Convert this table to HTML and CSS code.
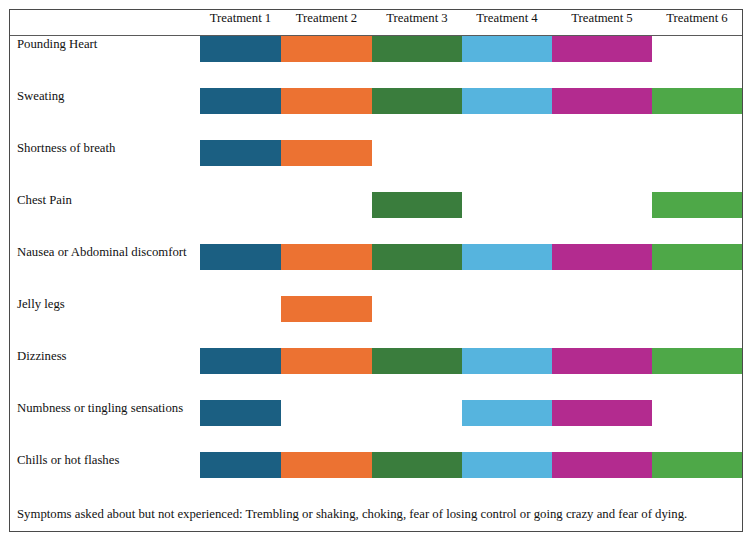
FILE: index.html
```html
<!DOCTYPE html>
<html>
<head>
<meta charset="utf-8">
<link rel="stylesheet" href="styles.css">
</head>
<body>
<div class="chart">
  <div class="row head">
    <div></div>
    <div class="th">Treatment 1</div>
    <div class="th">Treatment 2</div>
    <div class="th">Treatment 3</div>
    <div class="th">Treatment 4</div>
    <div class="th">Treatment 5</div>
    <div class="th">Treatment 6</div>
  </div>
  <div class="row">
    <div class="label">Pounding Heart</div>
    <div class="bar c1"></div><div class="bar c2"></div><div class="bar c3"></div><div class="bar c4"></div><div class="bar c5"></div><div class="bar"></div>
  </div>
  <div class="row">
    <div class="label">Sweating</div>
    <div class="bar c1"></div><div class="bar c2"></div><div class="bar c3"></div><div class="bar c4"></div><div class="bar c5"></div><div class="bar c6"></div>
  </div>
  <div class="row">
    <div class="label">Shortness of breath</div>
    <div class="bar c1"></div><div class="bar c2"></div><div class="bar"></div><div class="bar"></div><div class="bar"></div><div class="bar"></div>
  </div>
  <div class="row">
    <div class="label">Chest Pain</div>
    <div class="bar"></div><div class="bar"></div><div class="bar c3"></div><div class="bar"></div><div class="bar"></div><div class="bar c6"></div>
  </div>
  <div class="row">
    <div class="label">Nausea or Abdominal discomfort</div>
    <div class="bar c1"></div><div class="bar c2"></div><div class="bar c3"></div><div class="bar c4"></div><div class="bar c5"></div><div class="bar c6"></div>
  </div>
  <div class="row">
    <div class="label">Jelly legs</div>
    <div class="bar"></div><div class="bar c2"></div><div class="bar"></div><div class="bar"></div><div class="bar"></div><div class="bar"></div>
  </div>
  <div class="row">
    <div class="label">Dizziness</div>
    <div class="bar c1"></div><div class="bar c2"></div><div class="bar c3"></div><div class="bar c4"></div><div class="bar c5"></div><div class="bar c6"></div>
  </div>
  <div class="row">
    <div class="label">Numbness or tingling sensations</div>
    <div class="bar c1"></div><div class="bar"></div><div class="bar"></div><div class="bar c4"></div><div class="bar c5"></div><div class="bar"></div>
  </div>
  <div class="row">
    <div class="label">Chills or hot flashes</div>
    <div class="bar c1"></div><div class="bar c2"></div><div class="bar c3"></div><div class="bar c4"></div><div class="bar c5"></div><div class="bar c6"></div>
  </div>
  <p class="note">Symptoms asked about but not experienced: Trembling or shaking, choking, fear of losing control or going crazy and fear of dying.</p>
</div>
</body>
</html>
```

FILE: styles.css
```css
html, body {
  margin: 0;
  padding: 0;
  background: #ffffff;
}
body {
  font-family: "Liberation Serif", "Times New Roman", serif;
  font-size: 12.75px;
  color: #111111;
}
.chart {
  margin: 9px 0 0 9px;
  width: 732px;
  border: 1px solid #4a4a4a;
}
.row {
  display: grid;
  grid-template-columns: 190px 81px 91px 90px 90px 100px 90px;
  height: 52px;
}
.row.head {
  height: 25px;
  border-bottom: 1px solid #5a5a5a;
}
.th {
  text-align: center;
  padding-top: 1px;
  line-height: 15px;
}
.label {
  padding: 1px 0 0 7px;
  line-height: 15px;
}
.bar {
  height: 26px;
}
.c1 { background: #1b5f82; }
.c2 { background: #ec7232; }
.c3 { background: #3a7d3d; }
.c4 { background: #56b4de; }
.c5 { background: #b32b8f; }
.c6 { background: #4ea848; }
.note {
  margin: 3px 0 0 7px;
  padding-bottom: 9px;
  line-height: 15px;
}
```
